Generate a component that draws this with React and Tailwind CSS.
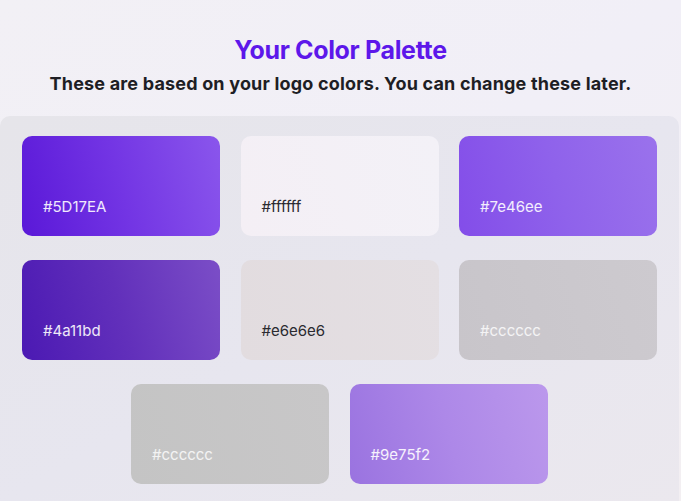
import React from 'react';

const rows = [
  [
    { hex: '#5D17EA', bg: 'bg-[linear-gradient(75deg,#5a18d8_0%,#7335e4_50%,#8a56ec_100%)]', text: 'text-white/90' },
    { hex: '#ffffff', bg: 'bg-[linear-gradient(75deg,#f4eff5_0%,#f3f1f7_100%)]', text: 'text-[#2a2a30]' },
    { hex: '#7e46ee', bg: 'bg-[linear-gradient(75deg,#834de9_0%,#8f62eb_50%,#9a72ec_100%)]', text: 'text-white/90' },
  ],
  [
    { hex: '#4a11bd', bg: 'bg-[linear-gradient(75deg,#4b19b3_0%,#6230bb_50%,#7b4ec7_100%)]', text: 'text-white/90' },
    { hex: '#e6e6e6', bg: 'bg-[linear-gradient(75deg,#e2dcdf_0%,#e4dfe3_100%)]', text: 'text-[#2a2a30]' },
    { hex: '#cccccc', bg: 'bg-[linear-gradient(75deg,#c8c5ca_0%,#cdcacf_100%)]', text: 'text-white/80' },
  ],
  [
    { hex: '#cccccc', bg: 'bg-[linear-gradient(75deg,#c4c4c4_0%,#c8c7c8_100%)]', text: 'text-white/80' },
    { hex: '#9e75f2', bg: 'bg-[linear-gradient(75deg,#9a73e0_0%,#ad88e8_50%,#bb98ec_100%)]', text: 'text-white/90' },
  ],
];

function Swatch({ hex, bg, text }) {
  return (
    <div className={`w-[198px] h-[100px] rounded-[10px] ${bg} flex items-end px-[21px] pb-[22px]`}>
      <span className={`text-[15px] leading-none ${text}`}>{hex}</span>
    </div>
  );
}

export default function App() {
  return (
    <div
      className="w-[681px] h-[501px] overflow-hidden bg-gradient-to-br from-[#f2f0f5] via-[#f1eff7] to-[#f3eff2] flex flex-col"
      style={{ fontFamily: 'Inter, "Liberation Sans", sans-serif' }}
    >
      <div className="flex flex-col items-center pt-[35px]">
        <h1 className="text-[25px] font-bold leading-[30px] text-[#5d17ea] tracking-[-0.35px]">Your Color Palette</h1>
        <p className="mt-[7px] text-[18px] font-bold leading-[24px] text-[#1e1e24] tracking-[0.18px]">
          These are based on your logo colors. You can change these later.
        </p>
      </div>
      <div className="mt-[20px] w-[679px] flex-1 rounded-t-[10px] bg-gradient-to-br from-[#e6e5ea] via-[#e7e6ef] to-[#ebe8ee] flex flex-col items-start gap-[24px] pt-[20px]">
        {rows.map((row, i) => (
          <div key={i} className={`flex gap-[20.5px] ${i === 2 ? 'pl-[131px]' : 'pl-[22px]'}`}>
            {row.map((s, j) => (
              <Swatch key={j} {...s} />
            ))}
          </div>
        ))}
      </div>
    </div>
  );
}
